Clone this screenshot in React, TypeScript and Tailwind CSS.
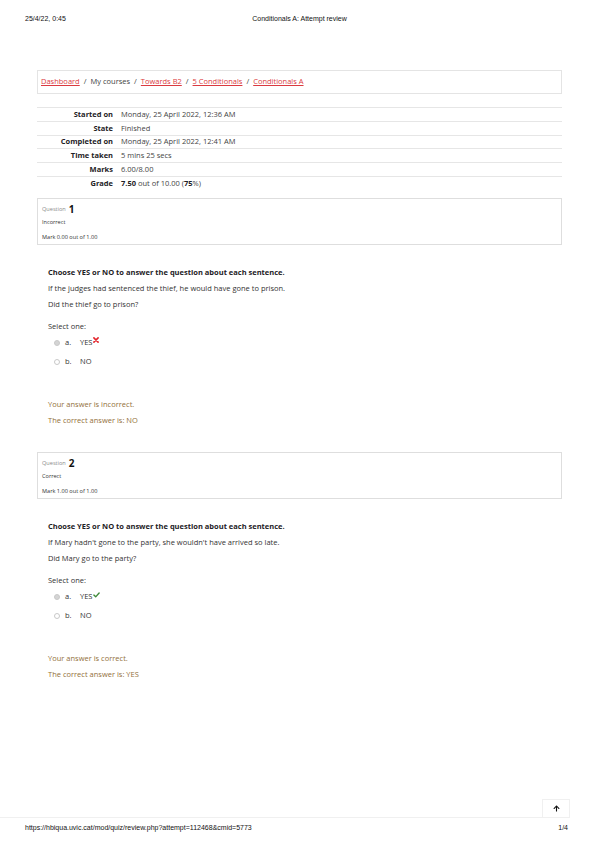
import React from "react";
import { FaArrowUp } from "react-icons/fa";

const body = { fontFamily: '"Open Sans", "Noto Sans", sans-serif' };

function Radio({ checked }: { checked?: boolean }) {
  return (
    <span
      className={
        "inline-block w-[6px] h-[6px] rounded-full border border-[#c9c9c9] " +
        (checked ? "bg-[#d4d4d4]" : "bg-white")
      }
    />
  );
}

function Cross() {
  return (
    <svg width="6" height="6" viewBox="0 0 10 10" className="mb-[5px] ml-[1px]">
      <path d="M1.5 1.5 L8.5 8.5 M8.5 1.5 L1.5 8.5" stroke="#e3242b" strokeWidth="2.6" strokeLinecap="round" />
    </svg>
  );
}

function Check() {
  return (
    <svg width="7" height="6" viewBox="0 0 12 10" className="mb-[3px] ml-[1px]">
      <path d="M1.5 5.2 L4.6 8.2 L10.5 1.6" stroke="#3f8a3a" strokeWidth="2.4" fill="none" strokeLinecap="round" strokeLinejoin="round" />
    </svg>
  );
}

function QuestionBox({ n, state, mark }: { n: number; state: string; mark: string }) {
  return (
    <div className="border border-[#dedede] px-[4px] pt-[3px] pb-[1px]">
      <div className="h-[14px] flex items-center gap-[3px]">
        <span className="text-[5.6px] text-[#8a8a8a]">Question</span>
        <span className="text-[10px] font-bold text-[#111] leading-none">{n}</span>
      </div>
      <div className="h-[12px] flex items-center text-[5.6px] text-[#333]">{state}</div>
      <div className="mt-[3px] h-[12px] flex items-center text-[5.6px] text-[#333]">{mark}</div>
    </div>
  );
}

function QuestionContent({
  s1,
  s2,
  correct,
  answer,
}: {
  s1: string;
  s2: string;
  correct: boolean;
  answer: string;
}) {
  return (
    <div className="px-[11px] text-[7.5px] text-[#333]">
      <div className="mt-[22px] h-[12px] flex items-center font-bold text-[#1d2125]">
        Choose YES or NO to answer the question about each sentence.
      </div>
      <div className="mt-[4px] h-[12px] flex items-center">{s1}</div>
      <div className="mt-[4px] h-[12px] flex items-center">{s2}</div>
      <div className="mt-[10px] h-[12px] flex items-center">Select one:</div>
      <div className="mt-[4px] h-[12px] flex items-center pl-[6px]">
        <Radio checked />
        <span className="ml-[5px] w-[15px]">a.</span>
        <span>YES</span>
        {correct ? <Check /> : <Cross />}
      </div>
      <div className="mt-[7px] h-[12px] flex items-center pl-[6px]">
        <Radio />
        <span className="ml-[5px] w-[15px]">b.</span>
        <span>NO</span>
      </div>
      <div className="mt-[31px] h-[12px] flex items-center text-[#93703b]">
        {correct ? "Your answer is correct." : "Your answer is incorrect."}
      </div>
      <div className="mt-[4px] h-[12px] flex items-center text-[#93703b]">
        The correct answer is: {answer}
      </div>
    </div>
  );
}

const rows: { label: string; value: React.ReactNode }[] = [
  { label: "Started on", value: "Monday, 25 April 2022, 12:36 AM" },
  { label: "State", value: "Finished" },
  { label: "Completed on", value: "Monday, 25 April 2022, 12:41 AM" },
  { label: "Time taken", value: "5 mins 25 secs" },
  { label: "Marks", value: "6.00/8.00" },
  {
    label: "Grade",
    value: (
      <>
        <b className="text-[#1d2125]">7.50</b> out of 10.00 (<b className="text-[#1d2125]">75</b>%)
      </>
    ),
  },
];

export default function App() {
  return (
    <div className="w-[599px] h-[848px] bg-white flex flex-col overflow-hidden">
      <div
        className="pt-[14px] px-[25px] grid grid-cols-3 text-[7px] leading-[10px] text-[#111]"
        style={{ fontFamily: '"Liberation Sans", Arial, sans-serif' }}
      >
        <span>25/4/22, 0:45</span>
        <span className="text-center whitespace-nowrap">Conditionals A: Attempt review</span>
        <span />
      </div>

      <div className="mx-[37px] flex flex-col" style={body}>
        <div className="mt-[46px] h-[24px] border border-[#e4e4e4] flex items-center px-[3px] text-[7.5px] text-[#444]">
          <a className="text-[#db3a40] underline">Dashboard</a>
          <span className="mx-[4px]">/</span>
          <span>My courses</span>
          <span className="mx-[4px]">/</span>
          <a className="text-[#db3a40] underline">Towards B2</a>
          <span className="mx-[4px]">/</span>
          <a className="text-[#db3a40] underline">5 Conditionals</a>
          <span className="mx-[4px]">/</span>
          <a className="text-[#db3a40] underline">Conditionals A</a>
        </div>

        <div className="mt-[13px] flex flex-col text-[7.5px]">
          {rows.map((r) => (
            <div key={r.label} className="h-[13.8px] border-t border-[#e6e6e6] flex items-center">
              <span className="w-[76px] text-right font-bold text-[#1d2125]">{r.label}</span>
              <span className="ml-[8px] text-[#444]">{r.value}</span>
            </div>
          ))}
        </div>

        <div className="mt-[8px]">
          <QuestionBox n={1} state="Incorrect" mark="Mark 0.00 out of 1.00" />
        </div>
        <QuestionContent
          s1="If the judges had sentenced the thief, he would have gone to prison."
          s2="Did the thief go to prison?"
          correct={false}
          answer="NO"
        />

        <div className="mt-[25px]">
          <QuestionBox n={2} state="Correct" mark="Mark 1.00 out of 1.00" />
        </div>
        <QuestionContent
          s1="If Mary hadn't gone to the party, she wouldn't have arrived so late."
          s2="Did Mary go to the party?"
          correct={true}
          answer="YES"
        />
      </div>

      <div className="mt-auto flex flex-col">
        <div className="flex items-end">
          <div className="flex-1 h-[1px] bg-[#f0f0f0]" />
          <div className="w-[28px] h-[19px] border border-[#f0f0f0] flex items-center justify-center">
            <FaArrowUp size={7} color="#111" />
          </div>
          <div className="w-[29px]" />
        </div>
        <div
          className="mt-[5px] mb-[15px] px-[25px] pr-[31px] flex justify-between text-[7px] leading-[10px] text-[#111]"
          style={{ fontFamily: '"Liberation Sans", Arial, sans-serif' }}
        >
          <span>https://hbiqua.uvic.cat/mod/quiz/review.php?attempt=112468&amp;cmid=5773</span>
          <span>1/4</span>
        </div>
      </div>
    </div>
  );
}
